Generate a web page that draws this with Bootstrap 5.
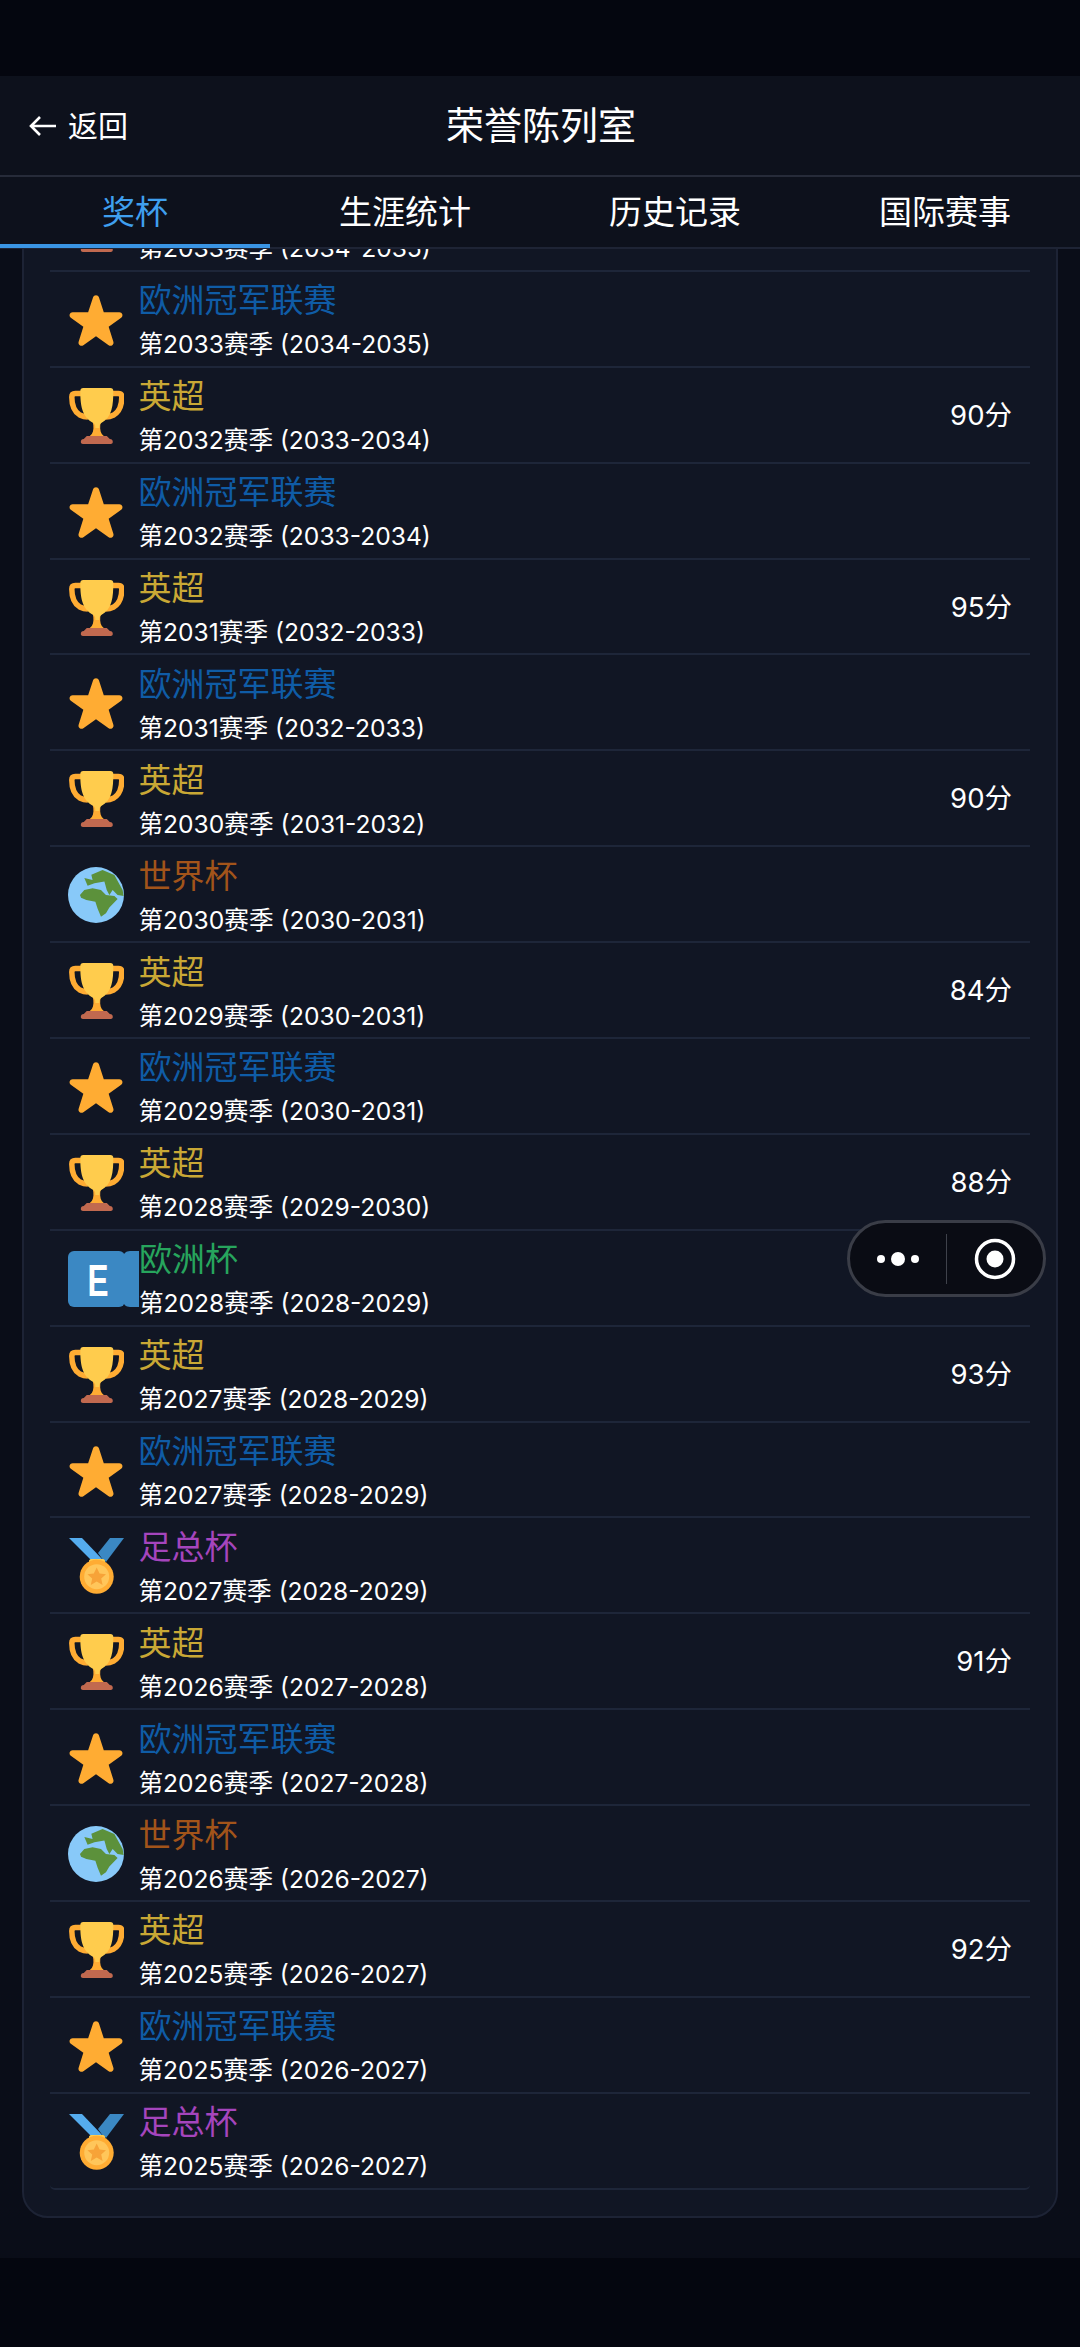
<!DOCTYPE html>
<html lang="zh">
<head>
<meta charset="utf-8">
<title>荣誉陈列室</title>
<link href="https://cdn.jsdelivr.net/npm/bootstrap@5.3.0/dist/css/bootstrap.min.css" rel="stylesheet">
<style>
html,body{height:100%;}
body{background:#04060f;color:#fff;font-family:"Inter","Noto Sans CJK SC",sans-serif;overflow:hidden;height:2347px;}
.status-band{height:76px;background:#04060f;}
.foot-band{height:89px;background:#04060f;}
.page-wrap{background:#0a0d18;}
.head-bar{height:101px;background:#0d111c;border-bottom:2px solid #262b39;position:relative;}
.back-link{font-size:30px;line-height:40px;color:#fff;margin-left:28px;gap:11px;text-decoration:none;}
.head-title{font-size:38px;line-height:50px;font-weight:400;color:#fff;left:2px;right:0;top:24px;margin:0;text-align:center;}
.tab-bar{height:72px;background:#0d111c;border-bottom:2px solid #1e2435;position:relative;z-index:2;}
.tab-item{width:270px;font-size:33px;line-height:70px;color:#fff;text-align:center;text-decoration:none;position:relative;}
.tab-item.is-on{color:#3f9fee;}
.tab-item.is-on::after{content:"";position:absolute;left:0;right:0;bottom:-1px;height:4px;background:#3a95e4;}
.scroll-area{height:2009px;overflow:hidden;}
.trophy-card{margin:-75px 22px 0;background:#111624;border:2px solid #1d2335;border-radius:26px;padding:0 26px 26px;}
.prize-row{--bs-list-group-bg:transparent;--bs-list-group-color:#fff;--bs-list-group-border-color:#1e2639;background:transparent;height:95.9px;padding:0 0 0 18px;border-bottom:2px solid #1e2639!important;position:relative;}
.prize-ico{width:56px;height:56px;flex:none;margin-right:14.500px;margin-top:2px;}
.prize-ico.wide{width:71px;margin-right:0;}
.prize-name{font-size:33px;line-height:46px;margin-top:2px;}
.prize-season{font-size:24.600px;line-height:36px;margin-top:3px;color:#fff;}
.prize-pts{font-size:27.500px;line-height:36px;color:#fff;margin-right:18px;}
.c-epl{color:#c9a835;}
.c-ucl{color:#0f5ca6;}
.c-wc{color:#a2541a;}
.c-euro{color:#27a55d;}
.c-fa{color:#a545bd;}
.float-pill{position:absolute;left:847px;top:1220px;width:199px;height:77px;background:#0a0c14;border:3px solid #3a3d47;border-radius:39px;z-index:5;}
.pill-side{width:96px;}
.pill-sep{width:2px;height:50px;background:#3f424b;}
</style>
</head>
<body>
<svg width="0" height="0" class="d-none" aria-hidden="true">
<symbol id="i-cup" viewBox="0 0 56 56">
<g transform="translate(.8 0)">
<path d="M14 5.500H6.500C4 5.500 3 7 3 9c0 8 3 15 8 18 2 1 5 2 8 2" fill="none" stroke="#ffac33" stroke-width="5.500"/>
<path d="M42 5.500h7.500C52 5.500 53 7 53 9c0 8-3 15-8 18-2 1-5 2-8 2" fill="none" stroke="#ffac33" stroke-width="5.500"/>
<path d="M24 34c1 4 1 9-1 12l-3 3h16l-3-3c-2-3-2-8-1-12z" fill="#ffac33"/>
<path d="M11.500 3c0-2 1-3 3-3h27c2 0 3 1 3 3 0 14-1 26-12 32-2 1-2 3-2 5h-4c0-2 0-4-2-5C13 29 11.500 17 11.500 3z" fill="#ffcc4d"/>
<path d="M12 54c0-2 1-3 3-3l3-3h20l3 3c2 0 3 1 3 3 0 1-1 2-2 2H14c-1 0-2-1-2-2z" fill="#c1694f"/>
</g>
</symbol>
<symbol id="i-star" viewBox="0 0 36 36">
<path fill="#ffac33" d="M27.287 34.627c-.404 0-.806-.124-1.152-.371L18 28.422l-8.135 5.834c-.693.496-1.623.496-2.312-.008-.689-.499-.979-1.385-.721-2.194l3.034-9.792-8.062-5.681c-.685-.505-.97-1.393-.708-2.203.264-.808 1.016-1.357 1.866-1.363L12.947 13l3.179-9.549c.268-.809 1.023-1.353 1.874-1.353.851 0 1.606.545 1.875 1.353L23 13l10.036.015c.853.006 1.606.556 1.867 1.363.263.81-.022 1.698-.708 2.203l-8.062 5.681 3.034 9.792c.26.809-.033 1.695-.72 2.194-.347.254-.753.379-1.16.379z"/>
</symbol>
<symbol id="i-globe" viewBox="0 0 36 36">
<circle cx="18" cy="18" r="18" fill="#88c9f9"/>
<path fill="#5c913b" d="M7.700 18l2.800-3.200 5.300-1.100 5.400 1.100 3.200 3.200 5.400.600 2.100 2-5.300 5.400-2.200 3.800-3.200 2.200-2.200-5.400-1.400-4.300-5.800-1.100-3.400-1.500z"/>
<path fill="#5c913b" d="M10.500 7l5.300 1.300-.8-3.300 7.200-3 7.600 3.100 5.300 9.700.700 3.800-3.900-.600-3.200-3.200-2.100 3.200-1.700-3.200-1.500-5.400-6.400 1.100-4.400 1.500z"/>
</symbol>
<symbol id="i-euro" viewBox="0 0 71 56">
<rect x="0" y="0" width="57" height="56" rx="6" fill="#3b88c3"/>
<path d="M71 0h-9c-4 0-7 3-7 6v44c0 3 3 6 7 6h9z" fill="#3b88c3"/>
<text x="30" y="45" text-anchor="middle" font-family="Liberation Sans, sans-serif" font-size="45" font-weight="700" fill="#fff" textLength="21" lengthAdjust="spacingAndGlyphs">E</text>
</symbol>
<symbol id="i-medal" viewBox="0 0 56 56">
<path d="M1 0h13l21 22-10 2z" fill="#55acee"/>
<path d="M56 0H42L30 15l5 7 3 2z" fill="#3b88c3"/>
<path d="M21 23c0-1 1-2 2-2h12c1 0 2 1 2 2v4H21z" fill="#ffcc4d"/>
<circle cx="28.700" cy="38.700" r="17" fill="#ffac33"/>
<circle cx="28.700" cy="38.700" r="12.500" fill="#ffc65a"/>
<path d="M28.700 29.500l2.900 6 6.400.700-4.800 4.300 1.400 6.400-5.900-3.400-5.900 3.400 1.400-6.400-4.800-4.300 6.400-.700z" fill="#f7a338"/>
</symbol>
</svg>

<div class="status-band"></div>
<div class="page-wrap">
  <header class="head-bar d-flex align-items-center">
    <a class="back-link d-flex align-items-center" href="#">
      <svg width="29" height="24" viewBox="0 0 29 24" aria-hidden="true"><path d="M28 12H3M12 3l-9 9 9 9" fill="none" stroke="#fff" stroke-width="2.600"/></svg>
      <span>返回</span>
    </a>
    <h1 class="head-title position-absolute">荣誉陈列室</h1>
  </header>
  <nav class="tab-bar d-flex">
    <a class="tab-item is-on" href="#">奖杯</a>
    <a class="tab-item" href="#">生涯统计</a>
    <a class="tab-item" href="#">历史记录</a>
    <a class="tab-item" href="#">国际赛事</a>
  </nav>
  <main class="scroll-area">
    <section class="card trophy-card">
      <ul class="list-group list-group-flush">
        <li class="list-group-item prize-row d-flex align-items-center"><svg class="prize-ico"><use href="#i-cup"/></svg><div class="flex-grow-1"><div class="prize-name c-epl">英超</div><div class="prize-season">第2033赛季 (2034-2035)</div></div></li>
        <li class="list-group-item prize-row d-flex align-items-center"><svg class="prize-ico"><use href="#i-star"/></svg><div class="flex-grow-1"><div class="prize-name c-ucl">欧洲冠军联赛</div><div class="prize-season">第2033赛季 (2034-2035)</div></div></li>
        <li class="list-group-item prize-row d-flex align-items-center"><svg class="prize-ico"><use href="#i-cup"/></svg><div class="flex-grow-1"><div class="prize-name c-epl">英超</div><div class="prize-season">第2032赛季 (2033-2034)</div></div><span class="prize-pts">90分</span></li>
        <li class="list-group-item prize-row d-flex align-items-center"><svg class="prize-ico"><use href="#i-star"/></svg><div class="flex-grow-1"><div class="prize-name c-ucl">欧洲冠军联赛</div><div class="prize-season">第2032赛季 (2033-2034)</div></div></li>
        <li class="list-group-item prize-row d-flex align-items-center"><svg class="prize-ico"><use href="#i-cup"/></svg><div class="flex-grow-1"><div class="prize-name c-epl">英超</div><div class="prize-season">第2031赛季 (2032-2033)</div></div><span class="prize-pts">95分</span></li>
        <li class="list-group-item prize-row d-flex align-items-center"><svg class="prize-ico"><use href="#i-star"/></svg><div class="flex-grow-1"><div class="prize-name c-ucl">欧洲冠军联赛</div><div class="prize-season">第2031赛季 (2032-2033)</div></div></li>
        <li class="list-group-item prize-row d-flex align-items-center"><svg class="prize-ico"><use href="#i-cup"/></svg><div class="flex-grow-1"><div class="prize-name c-epl">英超</div><div class="prize-season">第2030赛季 (2031-2032)</div></div><span class="prize-pts">90分</span></li>
        <li class="list-group-item prize-row d-flex align-items-center"><svg class="prize-ico"><use href="#i-globe"/></svg><div class="flex-grow-1"><div class="prize-name c-wc">世界杯</div><div class="prize-season">第2030赛季 (2030-2031)</div></div></li>
        <li class="list-group-item prize-row d-flex align-items-center"><svg class="prize-ico"><use href="#i-cup"/></svg><div class="flex-grow-1"><div class="prize-name c-epl">英超</div><div class="prize-season">第2029赛季 (2030-2031)</div></div><span class="prize-pts">84分</span></li>
        <li class="list-group-item prize-row d-flex align-items-center"><svg class="prize-ico"><use href="#i-star"/></svg><div class="flex-grow-1"><div class="prize-name c-ucl">欧洲冠军联赛</div><div class="prize-season">第2029赛季 (2030-2031)</div></div></li>
        <li class="list-group-item prize-row d-flex align-items-center"><svg class="prize-ico"><use href="#i-cup"/></svg><div class="flex-grow-1"><div class="prize-name c-epl">英超</div><div class="prize-season">第2028赛季 (2029-2030)</div></div><span class="prize-pts">88分</span></li>
        <li class="list-group-item prize-row d-flex align-items-center"><svg class="prize-ico wide"><use href="#i-euro"/></svg><div class="flex-grow-1"><div class="prize-name c-euro">欧洲杯</div><div class="prize-season">第2028赛季 (2028-2029)</div></div></li>
        <li class="list-group-item prize-row d-flex align-items-center"><svg class="prize-ico"><use href="#i-cup"/></svg><div class="flex-grow-1"><div class="prize-name c-epl">英超</div><div class="prize-season">第2027赛季 (2028-2029)</div></div><span class="prize-pts">93分</span></li>
        <li class="list-group-item prize-row d-flex align-items-center"><svg class="prize-ico"><use href="#i-star"/></svg><div class="flex-grow-1"><div class="prize-name c-ucl">欧洲冠军联赛</div><div class="prize-season">第2027赛季 (2028-2029)</div></div></li>
        <li class="list-group-item prize-row d-flex align-items-center"><svg class="prize-ico"><use href="#i-medal"/></svg><div class="flex-grow-1"><div class="prize-name c-fa">足总杯</div><div class="prize-season">第2027赛季 (2028-2029)</div></div></li>
        <li class="list-group-item prize-row d-flex align-items-center"><svg class="prize-ico"><use href="#i-cup"/></svg><div class="flex-grow-1"><div class="prize-name c-epl">英超</div><div class="prize-season">第2026赛季 (2027-2028)</div></div><span class="prize-pts">91分</span></li>
        <li class="list-group-item prize-row d-flex align-items-center"><svg class="prize-ico"><use href="#i-star"/></svg><div class="flex-grow-1"><div class="prize-name c-ucl">欧洲冠军联赛</div><div class="prize-season">第2026赛季 (2027-2028)</div></div></li>
        <li class="list-group-item prize-row d-flex align-items-center"><svg class="prize-ico"><use href="#i-globe"/></svg><div class="flex-grow-1"><div class="prize-name c-wc">世界杯</div><div class="prize-season">第2026赛季 (2026-2027)</div></div></li>
        <li class="list-group-item prize-row d-flex align-items-center"><svg class="prize-ico"><use href="#i-cup"/></svg><div class="flex-grow-1"><div class="prize-name c-epl">英超</div><div class="prize-season">第2025赛季 (2026-2027)</div></div><span class="prize-pts">92分</span></li>
        <li class="list-group-item prize-row d-flex align-items-center"><svg class="prize-ico"><use href="#i-star"/></svg><div class="flex-grow-1"><div class="prize-name c-ucl">欧洲冠军联赛</div><div class="prize-season">第2025赛季 (2026-2027)</div></div></li>
        <li class="list-group-item prize-row d-flex align-items-center"><svg class="prize-ico"><use href="#i-medal"/></svg><div class="flex-grow-1"><div class="prize-name c-fa">足总杯</div><div class="prize-season">第2025赛季 (2026-2027)</div></div></li>
      </ul>
    </section>
  </main>
</div>
<div class="foot-band"></div>

<div class="float-pill d-flex align-items-center">
  <div class="pill-side d-flex justify-content-center">
    <svg width="42" height="16" viewBox="0 0 42 16" aria-hidden="true"><circle cx="4" cy="8" r="4" fill="#fff"/><circle cx="21" cy="8" r="7" fill="#fff"/><circle cx="38" cy="8" r="4" fill="#fff"/></svg>
  </div>
  <div class="pill-sep"></div>
  <div class="pill-side d-flex justify-content-center">
    <svg width="42" height="42" viewBox="0 0 42 42" aria-hidden="true"><circle cx="21" cy="21" r="18.500" fill="none" stroke="#fff" stroke-width="3.500"/><circle cx="21" cy="21" r="8.500" fill="#fff"/></svg>
  </div>
</div>
<script src="https://cdn.jsdelivr.net/npm/bootstrap@5.3.0/dist/js/bootstrap.bundle.min.js"></script>
</body>
</html>
